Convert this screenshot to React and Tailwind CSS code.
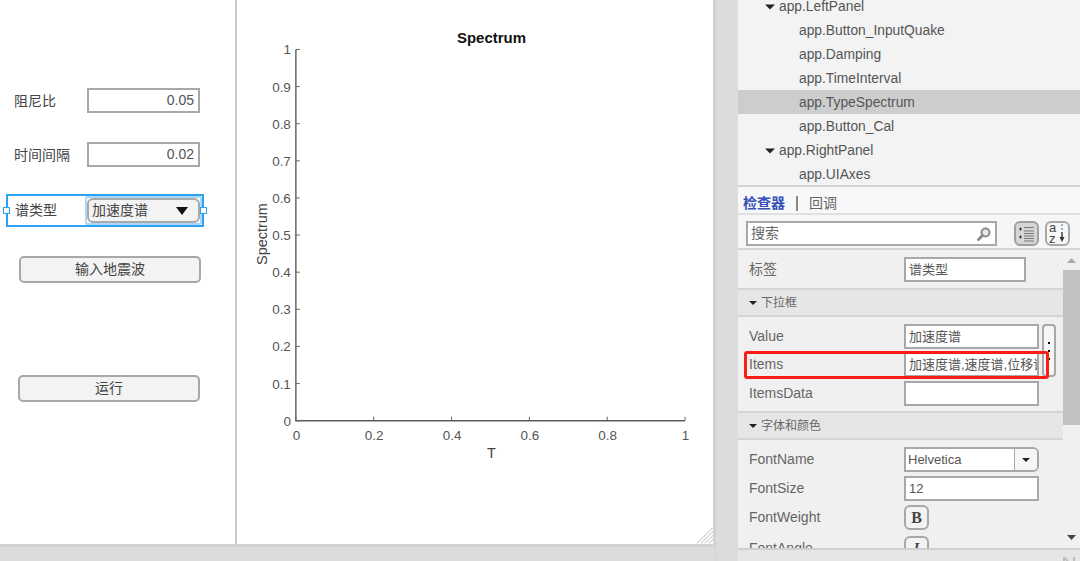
import React from 'react';

const FONT = 'font-["Liberation_Sans","Noto_Sans_CJK_SC",sans-serif]';

const treeRows = [
  { label: 'app.LeftPanel', parent: true },
  { label: 'app.Button_InputQuake' },
  { label: 'app.Damping' },
  { label: 'app.TimeInterval' },
  { label: 'app.TypeSpectrum', selected: true },
  { label: 'app.Button_Cal' },
  { label: 'app.RightPanel', parent: true },
  { label: 'app.UIAxes' },
];

const Caret = ({ className }) => (
  <svg width="10" height="6" viewBox="0 0 10 6" className={className}>
    <path d="M0 0.5 H10 L5 5.5 Z" fill="#222" />
  </svg>
);

const SpectrumChart = () => {
  const left = 59;
  const right = 449;
  const top = 49;
  const bottom = 421;
  const ticks = [0, 0.2, 0.4, 0.6, 0.8, 1];
  const yTicks = [0, 0.1, 0.2, 0.3, 0.4, 0.5, 0.6, 0.7, 0.8, 0.9, 1];
  return (
    <svg width="477" height="544" viewBox="0 0 477 544" className="block">
      <text x="255" y="43" textAnchor="middle" fontSize="15" fontWeight="700" fill="#111">Spectrum</text>
      <path d={`M${left} ${top} V${bottom} H${right}`} fill="none" stroke="#5c5c5c" strokeWidth="1.4" />
      {yTicks.map((t) => {
        const y = bottom - (bottom - top) * t;
        return (
          <g key={t}>
            <path d={`M${left} ${y} H${left + 4}`} stroke="#666" strokeWidth="1" />
            <text x={left - 5} y={y + 5} textAnchor="end" fontSize="13.5" fill="#555">{t}</text>
          </g>
        );
      })}
      {ticks.map((t) => {
        const x = left + (right - left) * t;
        return (
          <g key={t}>
            <path d={`M${x} ${bottom} V${bottom - 4}`} stroke="#666" strokeWidth="1" />
            <text x={x + 0.5} y={bottom + 19} textAnchor="middle" fontSize="13.5" fill="#555">{t}</text>
          </g>
        );
      })}
      <text x="255" y="458" textAnchor="middle" fontSize="14.5" fill="#444">T</text>
      <text transform="translate(30 234) rotate(-90)" textAnchor="middle" fontSize="14.5" fill="#444">Spectrum</text>
      <g stroke="#b8b8b8" strokeWidth="1">
        <path d="M461 544 L477 528" />
        <path d="M465 544 L477 532" />
        <path d="M469 544 L477 536" />
        <path d="M473 544 L477 540" />
      </g>
    </svg>
  );
};

const NumberField = ({ label, value, className }) => (
  <div className={`flex items-center ${className}`}>
    <span className="w-[87px] pl-[14px] pt-[1px] text-[14px] text-[#444]">{label}</span>
    <div className="h-[25px] w-[113px] border-2 border-[#a8a8a8] bg-white pr-[4px] text-right text-[14px] leading-[21px] text-[#555]">{value}</div>
  </div>
);

const LeftPanel = () => (
  <div className="w-[235px] shrink-0 bg-white">
    <NumberField label="阻尼比" value="0.05" className="mt-[88px]" />
    <NumberField label="时间间隔" value="0.02" className="mt-[29px]" />
    <div className="relative ml-[6px] mt-[27px] flex h-[33px] w-[198px] items-center border-2 border-[#2aa3f5]">
      <span className="w-[79px] pl-[7px] text-[14px] text-[#444]">谱类型</span>
      <div className="-ml-[2px] rounded-[2px] border-2 border-[#a9d8fb] p-0">
        <div className="flex h-[25px] w-[113px] items-center justify-between rounded-[6px] border-2 border-[#a8a8a8] bg-[#f3f3f3] pl-[3px] pr-[10px] text-[14px] text-[#444]">
          <span>加速度谱</span>
          <svg width="12" height="8" viewBox="0 0 12 8"><path d="M0 0 H12 L6 8 Z" fill="#111" /></svg>
        </div>
      </div>
      <span className="absolute -left-[5px] top-[11px] h-[7px] w-[7px] border border-[#2aa3f5] bg-white" />
      <span className="absolute -right-[5px] top-[11px] h-[7px] w-[7px] border border-[#2aa3f5] bg-white" />
    </div>
    <button className="ml-[19px] mt-[29px] block h-[27px] w-[182px] rounded-[5px] border-2 border-[#a8a8a8] bg-[#f3f3f3] text-[14px] text-[#444]">输入地震波</button>
    <button className="ml-[18px] mt-[92px] block h-[27px] w-[182px] rounded-[5px] border-2 border-[#a8a8a8] bg-[#f3f3f3] text-[14px] text-[#444]">运行</button>
  </div>
);

const ComponentTree = () => (
  <div className="h-[187px] shrink-0 overflow-hidden border-b-2 border-[#d4d4d4] bg-[#f3f3f3]">
    <div className="-mt-[6px]">
      {treeRows.map((row) => (
        <div
          key={row.label}
          className={`flex h-[24px] items-center pt-[2px] text-[13.8px] text-[#555] ${row.selected ? 'bg-[#cdcdcd]' : ''} ${row.parent ? 'pl-[27px]' : 'pl-[61px]'}`}
        >
          {row.parent && <Caret className="mr-[4px] w-[10px]" />}
          {row.label}
        </div>
      ))}
    </div>
  </div>
);

const InspectorTabs = () => (
  <div className="flex h-[28px] shrink-0 items-center border-b-2 border-[#e0e0e0] bg-[#f8f8f8] pl-[5px] pt-[7px] text-[14px]">
    <span className="font-bold text-[#3650b8]">检查器</span>
    <span className="mx-[11px] h-[15px] w-[2px] bg-[#888]" />
    <span className="text-[#666]">回调</span>
  </div>
);

const SearchBar = () => (
  <div className="flex h-[35px] shrink-0 items-center border-b-2 border-[#d4d4d4] bg-[#f6f6f6] pl-[8px] pt-[4px]">
    <div className="flex h-[25px] w-[251px] items-center justify-between border-2 border-[#a8a8a8] bg-white pl-[3px] pr-[3px] text-[14px] text-[#666]">
      <span>搜索</span>
      <svg width="16" height="16" viewBox="0 0 16 16">
        <circle cx="9.5" cy="6.5" r="4" fill="#e8e8e8" stroke="#8a8a8a" strokeWidth="2" />
        <path d="M6.5 9.5 L2.5 13.5" stroke="#8a8a8a" strokeWidth="3" strokeLinecap="round" />
      </svg>
    </div>
    <div className="ml-[17px] flex h-[25px] w-[25px] items-center justify-center rounded-[6px] border-2 border-[#a0a0a0] bg-[#d6d6d6]">
      <svg width="17" height="17" viewBox="0 0 17 17">
        <path d="M1 4 H4 M2.5 2.5 V5.5 M1 12 H4 M2.5 10.5 V13.5" stroke="#333" strokeWidth="1" />
        <path d="M6 2.5 H16 M6 6 H16 M6 8.5 H16 M6 11 H16 M6 13.5 H16 M6 16 H16" stroke="#777" strokeWidth="1.2" />
      </svg>
    </div>
    <div className="ml-[6px] flex h-[25px] w-[25px] items-center justify-center rounded-[6px] border-2 border-[#a8a8a8] bg-[#f6f6f6]">
      <svg width="19" height="21" viewBox="0 0 19 21">
        <text x="1" y="9" fontSize="13" fill="#444">a</text>
        <text x="1" y="20" fontSize="13" fill="#444">z</text>
        <path d="M14 1 V3 M14 5 V7" stroke="#5a86c8" strokeWidth="1.2" />
        <path d="M14 9 V17" stroke="#333" strokeWidth="1.4" />
        <path d="M11.5 14 H16.5 L14 19 Z" fill="#333" />
      </svg>
    </div>
  </div>
);

const PropLabel = ({ children }) => (
  <span className="w-[166px] shrink-0 pl-[11px] text-[14px] text-[#666]">{children}</span>
);

const PropInput = ({ children, className = 'w-[135px]' }) => (
  <div className={`h-[25px] overflow-hidden whitespace-nowrap border-2 border-[#a8a8a8] bg-white pl-[3px] text-[13px] leading-[21px] text-[#555] ${className}`}>{children}</div>
);

const SectionHeader = ({ title, className }) => (
  <div className={`flex h-[29px] w-[325px] items-center border-y-2 border-[#d4d4d4] bg-[#e6e6e6] pl-[11px] text-[12px] text-[#666] ${className}`}>
    <Caret className="mr-[4px] w-[8px]" />
    {title}
  </div>
);

const PropertyList = () => (
  <div className="relative min-h-0 flex-1 overflow-hidden bg-[#f0f0f0]">
    <div className="mt-[7px] flex h-[25px] items-center">
      <PropLabel>标签</PropLabel>
      <PropInput className="w-[122px]">谱类型</PropInput>
    </div>
    <SectionHeader title="下拉框" className="mt-[6px]" />
    <div className="relative pt-[7px]">
      <div className="flex h-[25px] items-center">
        <PropLabel>Value</PropLabel>
        <PropInput>加速度谱</PropInput>
      </div>
      <div className="mt-[3px] flex h-[25px] items-center">
        <PropLabel>Items</PropLabel>
        <PropInput>加速度谱,速度谱,位移谱</PropInput>
      </div>
      <div className="absolute left-[304px] top-[7px] flex h-[53px] w-[14px] flex-col items-center justify-center gap-[6px] rounded-[4px] border-2 border-[#a8a8a8] bg-[#f6f6f6]">
        <span className="h-[2px] w-[2px] bg-black" />
        <span className="h-[2px] w-[2px] bg-black" />
        <span className="h-[2px] w-[2px] bg-black" />
      </div>
    </div>
    <div className="mt-[4px] flex h-[25px] items-center">
      <PropLabel>ItemsData</PropLabel>
      <PropInput />
    </div>
    <SectionHeader title="字体和颜色" className="mt-[5px]" />
    <div className="mt-[7px] flex h-[25px] items-center">
      <PropLabel>FontName</PropLabel>
      <div className="flex h-[25px] w-[135px] overflow-hidden rounded-r-[6px] border-2 border-[#a8a8a8] bg-white text-[13px] leading-[21px] text-[#555]">
        <span className="flex-1 pl-[2px]">Helvetica</span>
        <span className="flex w-[23px] items-center justify-center border-l border-[#a8a8a8] bg-[#f6f6f6]"><Caret className="w-[8px]" /></span>
      </div>
    </div>
    <div className="mt-[4px] flex h-[25px] items-center">
      <PropLabel>FontSize</PropLabel>
      <PropInput>12</PropInput>
    </div>
    <div className="mt-[4px] flex h-[25px] items-center">
      <PropLabel>FontWeight</PropLabel>
      <div className="flex h-[25px] w-[25px] items-center justify-center rounded-[6px] border-2 border-[#a8a8a8] bg-[#f3f3f3] font-['Liberation_Serif',serif] text-[16px] font-bold text-[#444]">B</div>
    </div>
    <div className="mt-[6px] flex h-[25px] items-center">
      <PropLabel>FontAngle</PropLabel>
      <div className="flex h-[25px] w-[25px] items-center justify-center rounded-[6px] border-2 border-[#a8a8a8] bg-[#f3f3f3] font-['Liberation_Serif',serif] text-[15px] font-bold italic text-[#444]">I</div>
    </div>
    <div className="absolute left-[6px] top-[101px] h-[28px] w-[305px] rounded-[3px] border-[3px] border-[#fb1e14]" />
    <div className="absolute right-0 top-0 flex h-full w-[17px] flex-col items-center bg-[#f0f0f0]">
      <svg width="9" height="6" viewBox="0 0 9 6" className="mt-[8px]"><path d="M0 5 H9 L4.5 0 Z" fill="#aaa" /></svg>
      <div className="mt-[6px] h-[155px] w-full shrink-0 bg-[#c2c2c2]" />
      <svg width="9" height="6" viewBox="0 0 9 6" className="mt-[110px]"><path d="M0 0 H9 L4.5 5 Z" fill="#444" /></svg>
    </div>
  </div>
);

const Inspector = () => (
  <div className="flex min-w-0 flex-1 flex-col">
    <ComponentTree />
    <InspectorTabs />
    <SearchBar />
    <PropertyList />
    <div className="flex h-[13px] shrink-0 justify-end overflow-hidden border-t-2 border-[#cfcfcf] bg-[#e6e6e6] pr-[4px]">
      <svg width="13" height="11" viewBox="0 0 13 11" className="mt-[7px] shrink-0"><path d="M1 11 V0 L8 8 M11 0 V11" fill="none" stroke="#bdbdbd" strokeWidth="2" /></svg>
    </div>
  </div>
);

export default function App() {
  return (
    <div className={`flex h-[561px] w-[1080px] overflow-hidden bg-[#dcdcdc] ${FONT}`}>
      <div className="w-[715px] shrink-0">
        <div className="flex h-[547px] border-b-[3px] border-r-2 border-[#d2d2d2] bg-white">
          <LeftPanel />
          <div className="w-[2px] shrink-0 bg-[#c8c8c8]" />
          <SpectrumChart />
        </div>
      </div>
      <div className="w-[23px] shrink-0 border-l border-[#d2d2d2] bg-[#dcdcdc]" />
      <Inspector />
    </div>
  );
}
